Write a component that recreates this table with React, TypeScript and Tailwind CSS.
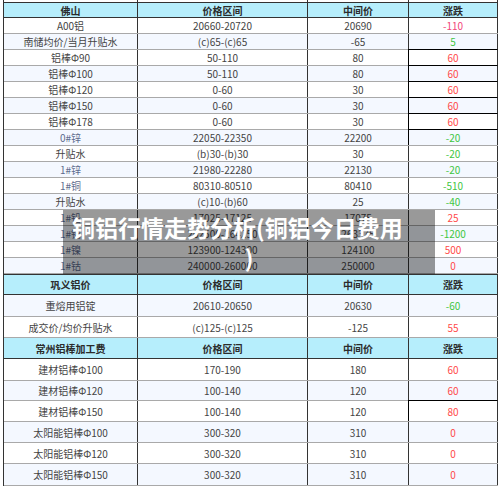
import React from "react";

interface Row {
  cells: [string, string, string, string];
  change: "r" | "g" | "p";
  blue?: boolean;
  h: number;
  alt?: boolean;
  dark?: boolean;
}

const head1 = ["佛山", "价格区间", "中间价", "涨跌"];
const head2 = ["巩义铝价", "价格区间", "中间价", "涨跌"];
const head3 = ["常州铝棒加工费", "价格区间", "中间价", "涨跌"];

const foshan: Row[] = [
  { cells: ["A00铝", "20660-20720", "20690", "-110"], change: "p", h: 16 },
  { cells: ["南储均价/当月升贴水", "(c)65-(c)65", "-65", "5"], change: "g", h: 16, alt: true },
  { cells: ["铝棒Φ90", "50-110", "80", "60"], change: "r", h: 16, dark: true },
  { cells: ["铝棒Φ100", "50-110", "80", "60"], change: "r", h: 16, alt: true, dark: true },
  { cells: ["铝棒Φ120", "0-60", "30", "60"], change: "r", h: 16, dark: true },
  { cells: ["铝棒Φ150", "0-60", "30", "60"], change: "r", h: 16, alt: true, dark: true },
  { cells: ["铝棒Φ178", "0-60", "30", "60"], change: "r", h: 16, dark: true },
  { cells: ["0#锌", "22050-22350", "22200", "-20"], change: "g", h: 16, alt: true, blue: true, dark: true },
  { cells: ["升贴水", "(b)30-(b)30", "30", "-20"], change: "g", h: 16 },
  { cells: ["1#锌", "21980-22280", "22130", "-20"], change: "g", h: 16, alt: true, blue: true },
  { cells: ["1#铜", "80310-80510", "80410", "-510"], change: "g", h: 16, blue: true },
  { cells: ["升贴水", "(c)10-(b)60", "25", "-40"], change: "g", h: 16, alt: true },
  { cells: ["1#铅", "17025-17125", "17075", "25"], change: "r", h: 16, blue: true },
  { cells: ["1#锡", "262500-264250", "263375", "-1200"], change: "g", h: 16, alt: true, blue: true },
  { cells: ["1#镍", "123900-124300", "124100", "500"], change: "r", h: 16, blue: true },
  { cells: ["1#钴", "240000-260000", "250000", "0"], change: "r", h: 16, alt: true, blue: true },
];

const gongyi: Row[] = [
  { cells: ["重熔用铝锭", "20610-20650", "20630", "-60"], change: "g", h: 22, alt: true },
  { cells: ["成交价/均价升贴水", "(c)125-(c)125", "-125", "55"], change: "r", h: 21 },
];

const changzhou: Row[] = [
  { cells: ["建材铝棒Φ100", "170-190", "180", "60"], change: "r", h: 22 },
  { cells: ["建材铝棒Φ120", "100-140", "120", "60"], change: "r", h: 20, alt: true },
  { cells: ["建材铝棒Φ150", "100-140", "120", "80"], change: "r", h: 21, dark: true },
  { cells: ["太阳能铝棒Φ100", "300-320", "310", "0"], change: "r", h: 21, alt: true },
  { cells: ["太阳能铝棒Φ120", "300-320", "310", "0"], change: "r", h: 21 },
  { cells: ["太阳能铝棒Φ150", "300-320", "310", "0"], change: "r", h: 22, alt: true },
];

const changeColor = {
  r: "text-[#ff4a4a]",
  g: "text-[#3fc63f]",
  p: "text-[#f2467a]",
};

function HeadRow({ labels, h }: { labels: string[]; h: number }) {
  return (
    <div
      className="grid grid-cols-[134px_170px_101px_89px] bg-[#b6eefc] border-b border-[#333] font-bold text-[10px] text-[#2b2b2b]"
      style={{ height: h }}
    >
      {labels.map((l, i) => (
        <div key={i} className="flex items-center justify-center border-r border-[#333]">
          {l}
        </div>
      ))}
    </div>
  );
}

function BodyRow({ row }: { row: Row }) {
  return (
    <div
      className={`grid grid-cols-[134px_170px_101px_89px] border-b border-[#a9a9a9] text-[10px] ${
        row.alt ? "bg-[#f4f8ff]" : "bg-white"
      }`}
      style={{ height: row.h }}
    >
      <div
        className={`flex items-center justify-center border-r border-[#333] ${
          row.blue ? "text-[#5d6b8e]" : "text-[#444]"
        }`}
      >
        {row.cells[0]}
      </div>
      <div className="flex items-center justify-center border-r border-[#333] text-[#444]">
        {row.cells[1]}
      </div>
      <div className="flex items-center justify-center border-r border-[#333] text-[#444]">
        {row.cells[2]}
      </div>
      <div
        className={`flex items-center justify-center border-r border-[#333] ${changeColor[row.change]} ${
          row.dark ? "border-l border-t border-l-black border-t-black -ml-px -mt-px" : ""
        }`}
      >
        {row.cells[3]}
      </div>
    </div>
  );
}

export default function App() {
  return (
    <div
      className="relative w-[500px] h-[488px] bg-white overflow-hidden"
      style={{ fontFamily: '"Noto Sans CJK SC", "Noto Sans", sans-serif' }}
    >
      <div className="ml-[3px] w-[495px] border-l border-[#333]">
        <div className="grid grid-cols-[134px_170px_101px_89px] h-[3px] border-b border-[#333]">
          <div className="border-r border-[#333]" />
          <div className="border-r border-[#333]" />
          <div className="border-r border-[#333]" />
          <div className="border-r border-[#333]" />
        </div>
        <HeadRow labels={head1} h={15} />
        {foshan.map((r, i) => (
          <BodyRow key={i} row={r} />
        ))}
        <div className="border-t border-[#333]" />
        <HeadRow labels={head2} h={20} />
        {gongyi.map((r, i) => (
          <BodyRow key={i} row={r} />
        ))}
        <HeadRow labels={head3} h={21} />
        {changzhou.map((r, i) => (
          <BodyRow key={i} row={r} />
        ))}
      </div>

      <div className="absolute left-[63px] top-[210px] w-[372px] h-[64px] bg-black/40 pt-[2px] text-white font-bold text-[23px] leading-[30px]">
        <div className="pl-[9px] whitespace-nowrap">铜铝行情走势分析(铜铝今日费用</div>
        <div className="text-center">)</div>
      </div>
    </div>
  );
}
